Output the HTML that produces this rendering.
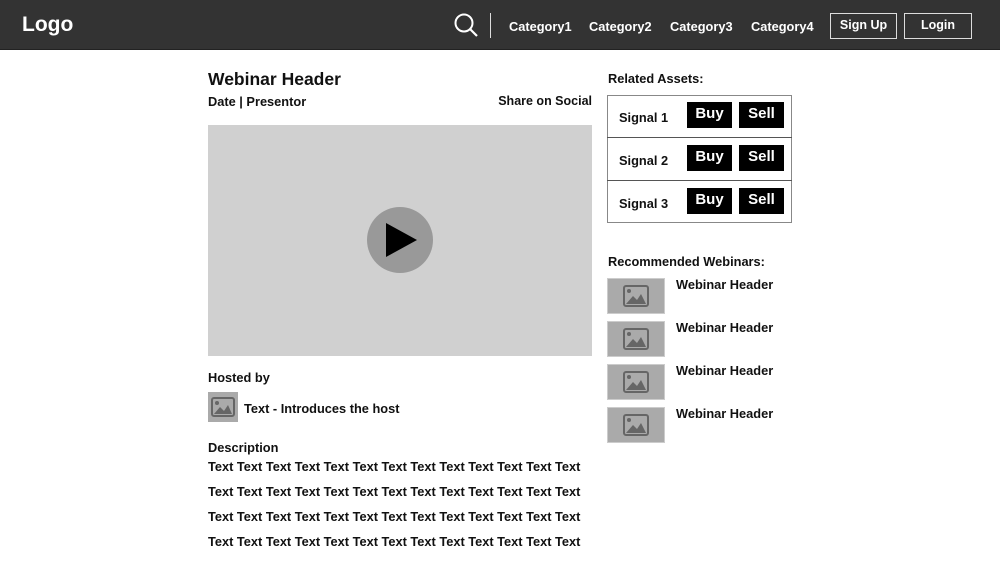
<!DOCTYPE html><html><head><style>
*{margin:0;padding:0;box-sizing:border-box}
body{width:1000px;height:563px;background:#fff;font-family:"Liberation Sans",sans-serif;position:relative;overflow:hidden;color:#111;font-weight:bold}
.a{position:absolute;white-space:nowrap}
.hdr{position:absolute;left:0;top:0;width:1000px;height:50px;background:#333;border-bottom:1px solid #222}
.w{color:#fff}
.btn{position:absolute;border:1.5px solid #ddd;color:#fff;font-size:12.5px;text-align:center;line-height:23px}
.bs{position:absolute;background:#000;color:#fff;font-size:15px;text-align:center;line-height:24px;width:45px;height:26px}
.th{position:absolute;left:607px;width:58px;height:36px;background:#aaa;border:1px solid #ccc}
.t{font-size:12.8px}
</style></head><body>
<div class="hdr"></div>
<div class="a w" style="left:22px;top:13px;font-size:21px">Logo</div>
<svg class="a" style="left:453px;top:12px" width="26" height="26"><circle cx="11" cy="11" r="8.5" fill="none" stroke="#fff" stroke-width="2"/><line x1="17" y1="17" x2="24" y2="24" stroke="#fff" stroke-width="2.2"/></svg>
<div class="a" style="left:490px;top:13px;width:1px;height:25px;background:#ddd"></div>
<div class="a w" style="left:509px;top:19px;font-size:12.8px">Category1</div>
<div class="a w" style="left:589px;top:19px;font-size:12.8px">Category2</div>
<div class="a w" style="left:670px;top:19px;font-size:12.8px">Category3</div>
<div class="a w" style="left:751px;top:19px;font-size:12.8px">Category4</div>
<div class="btn" style="left:830px;top:13px;width:67px;height:26px">Sign Up</div>
<div class="btn" style="left:904px;top:13px;width:68px;height:26px">Login</div>

<div class="a" style="left:208px;top:69px;font-size:17.5px">Webinar Header</div>
<div class="a" style="left:208px;top:94px;font-size:12.8px">Date | Presentor</div>
<div class="a" style="right:408px;top:94px;font-size:12.5px">Share on Social</div>
<div class="a" style="left:208px;top:125px;width:384px;height:231px;background:#d0d0d0"></div>
<svg class="a" style="left:367px;top:207px" width="66" height="66"><circle cx="33" cy="33" r="33" fill="#999"/><polygon points="19,16 19,50 50,33" fill="#000"/></svg>

<div class="a" style="left:208px;top:370px;font-size:12.8px">Hosted by</div>
<div class="a" style="left:208px;top:392px;width:30px;height:30px;background:#aaa"></div>
<svg class="a" style="left:211px;top:397px" width="24" height="20"><rect x="1" y="1" width="22" height="18" rx="2" fill="none" stroke="#666" stroke-width="2"/><circle cx="6" cy="6" r="2" fill="#666"/><polygon points="3,17 9,10 13,14 17,8 21,17" fill="#666"/></svg>
<div class="a" style="left:244px;top:401px;font-size:12.8px">Text - Introduces the host</div>

<div class="a" style="left:208px;top:440px;font-size:12.8px">Description</div>
<div class="a t" style="left:208px;top:459px">Text Text Text Text Text Text Text Text Text Text Text Text Text</div>
<div class="a t" style="left:208px;top:484px">Text Text Text Text Text Text Text Text Text Text Text Text Text</div>
<div class="a t" style="left:208px;top:509px">Text Text Text Text Text Text Text Text Text Text Text Text Text</div>
<div class="a t" style="left:208px;top:534px">Text Text Text Text Text Text Text Text Text Text Text Text Text</div>

<div class="a" style="left:608px;top:71px;font-size:12.8px">Related Assets:</div>
<div class="a" style="left:607px;top:95px;width:185px;height:128px;border:1px solid #888"></div>
<div class="a" style="left:607px;top:137px;width:185px;height:1px;background:#555"></div>
<div class="a" style="left:607px;top:180px;width:185px;height:1px;background:#555"></div>
<div class="a" style="left:619px;top:110px;font-size:12.8px">Signal 1</div>
<div class="a" style="left:619px;top:153px;font-size:12.8px">Signal 2</div>
<div class="a" style="left:619px;top:196px;font-size:12.8px">Signal 3</div>
<div class="bs" style="left:687px;top:102px">Buy</div><div class="bs" style="left:739px;top:102px">Sell</div>
<div class="bs" style="left:687px;top:145px">Buy</div><div class="bs" style="left:739px;top:145px">Sell</div>
<div class="bs" style="left:687px;top:188px">Buy</div><div class="bs" style="left:739px;top:188px">Sell</div>

<div class="a" style="left:608px;top:254px;font-size:12.8px">Recommended Webinars:</div>
<div class="th" style="top:278px"></div><div class="th" style="top:321px"></div><div class="th" style="top:364px"></div><div class="th" style="top:407px"></div>
<svg class="a" style="left:623px;top:285px" width="26" height="22"><rect x="1" y="1" width="24" height="20" rx="2" fill="none" stroke="#666" stroke-width="2"/><circle cx="6" cy="6" r="2" fill="#666"/><polygon points="3,19 10,11 14,15 18,9 23,19" fill="#666"/></svg>
<svg class="a" style="left:623px;top:328px" width="26" height="22"><rect x="1" y="1" width="24" height="20" rx="2" fill="none" stroke="#666" stroke-width="2"/><circle cx="6" cy="6" r="2" fill="#666"/><polygon points="3,19 10,11 14,15 18,9 23,19" fill="#666"/></svg>
<svg class="a" style="left:623px;top:371px" width="26" height="22"><rect x="1" y="1" width="24" height="20" rx="2" fill="none" stroke="#666" stroke-width="2"/><circle cx="6" cy="6" r="2" fill="#666"/><polygon points="3,19 10,11 14,15 18,9 23,19" fill="#666"/></svg>
<svg class="a" style="left:623px;top:414px" width="26" height="22"><rect x="1" y="1" width="24" height="20" rx="2" fill="none" stroke="#666" stroke-width="2"/><circle cx="6" cy="6" r="2" fill="#666"/><polygon points="3,19 10,11 14,15 18,9 23,19" fill="#666"/></svg>
<div class="a" style="left:676px;top:277px;font-size:12.8px">Webinar Header</div>
<div class="a" style="left:676px;top:320px;font-size:12.8px">Webinar Header</div>
<div class="a" style="left:676px;top:363px;font-size:12.8px">Webinar Header</div>
<div class="a" style="left:676px;top:406px;font-size:12.8px">Webinar Header</div>
</body></html>
